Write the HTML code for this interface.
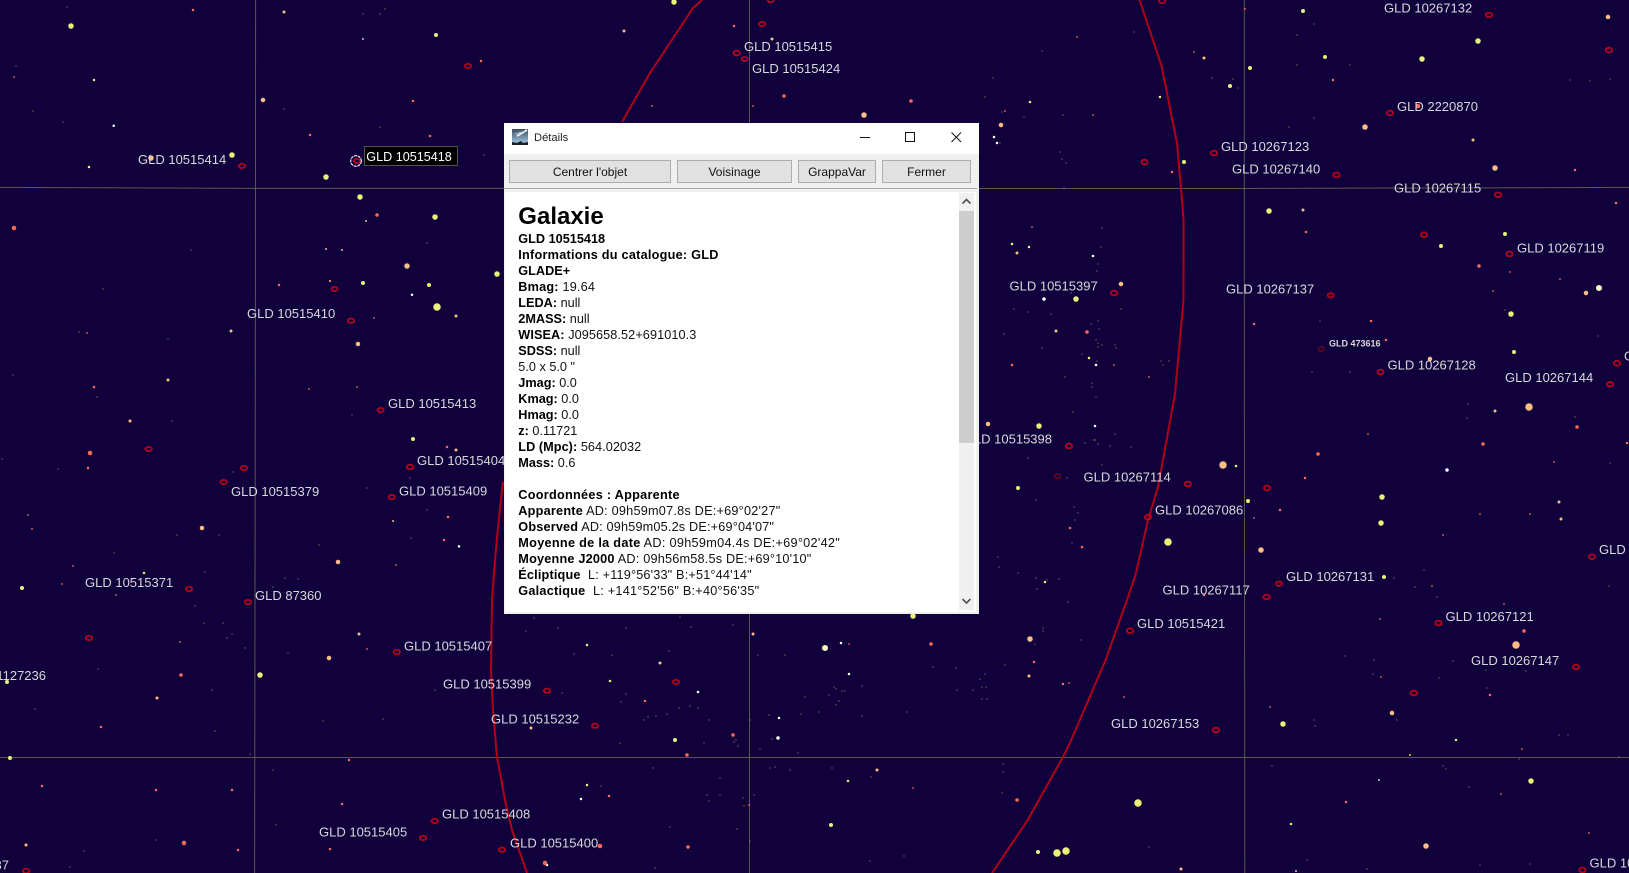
<!DOCTYPE html>
<html><head><meta charset="utf-8"><title>Détails</title>
<style>
html,body{margin:0;padding:0;width:1629px;height:873px;overflow:hidden;background:#10003c}
svg.sky{position:absolute;left:0;top:0}
.sky text{font-family:"Liberation Sans",Arial,sans-serif;font-size:13px;fill:#d9d9d9}
.d{fill:none;stroke-linecap:round}
#w{position:absolute;left:504px;top:123px;width:475px;height:491px;background:#f0f0f0;font-family:"Liberation Sans",Arial,sans-serif;color:#000}
#tb{position:absolute;left:0;top:0;width:475px;height:31px;background:#fff}
#tb span{position:absolute;left:30px;top:8px;font-size:11.2px;line-height:14px;color:#222}
#bar{position:absolute;left:0;top:65px;width:473px;height:1px;background:#a8a8a8}
.b{position:absolute;top:37px;height:21px;background:#e1e1e1;border:1px solid #adadad;font-size:12px;line-height:23px;text-align:center;color:#111}
#c{position:absolute;left:1px;top:69px;width:471px;height:420px;background:#fff;overflow:hidden}
#t{position:absolute;left:13.3px;top:39px;font-size:12.7px;line-height:16px;white-space:nowrap;color:#111}
#t b{color:#000}
#h{position:absolute;left:13.3px;top:10px;font-size:24px;font-weight:bold;line-height:30px;color:#000}
#sb{position:absolute;left:454px;top:1px;width:15px;height:417px;background:#f0f0f0}
#th{position:absolute;left:0;top:18px;width:15px;height:232px;background:#cdcdcd}
</style></head><body>
<svg class="sky" width="1629" height="873" viewBox="0 0 1629 873" xmlns="http://www.w3.org/2000/svg">
<rect width="1629" height="873" fill="#10003c"/>
<g fill="none" stroke="#5a584c" stroke-width="1">
<path d="M255.6 0L255.4 300L254.6 873"/><path d="M749.5 0V873"/><path d="M1244.3 0V300L1244.8 873"/>
<path d="M0 187.4L255 188.4L1244 188.5L1629 187.4"/><path d="M0 757.5H1629"/>
</g>
<g fill="none" stroke="#b00018" stroke-width="2">
<path d="M702 0L693 8L650 73L622 122M503 482Q496 540 492 600L491 670L493 710L497 757L505 800L512 830L527 873"/>
<path d="M1139.6 0L1161.6 66L1177 143L1181 188L1183.6 220L1183.5 300L1175 394L1158 487L1148 520L1135.5 575L1127 600L1105.6 660L1069 745L1063 757L1027.7 820L992 873"/>
</g>
<g class="d" stroke-width="1.3" stroke="#8a8460">
<path d="M67 7h0M16 66h0M33 111h0M63 122h0M380 127h0M484 155h0M191 250h0M103 289h0M427 243h0M284 109h0M385 9h0M380 14h0M363 14h0M79 332h0M168 339h0M13 375h0M97 397h0M172 421h0M2 459h0M58 469h0M233 472h0M177 535h0M219 535h0M319 545h0M285 578h0M367 488h0M411 538h0M427 510h0M410 478h0M298 579h0M273 587h0M205 572h0M114 553h0M352 415h0M98 669h0M35 709h0M204 623h0M223 623h0M232 634h0M227 638h0M245 648h0M212 690h0M215 731h0M250 754h0M273 770h0M323 721h0M288 653h0M383 719h0M328 829h0M276 825h0M84 851h0M70 867h0M156 840h0M195 606h0M461 814h0M435 690h0"/>
<path d="M534 618h0M680 617h0M691 627h0M558 628h0M526 631h0M626 628h0M733 625h0M574 654h0M669 651h0M612 655h0M562 693h0M626 694h0M644 720h0M679 708h0M698 708h0M690 706h0M667 714h0M621 702h0M648 717h0M656 716h0M709 720h0M620 743h0M734 742h0M736 740h0M738 746h0M769 715h0M750 720h0M704 743h0M760 749h0M772 739h0M805 697h0M819 712h0M801 714h0M862 716h0M845 691h0M836 705h0M829 695h0M834 687h0M836 689h0M842 691h0M862 686h0M907 712h0M973 690h0M980 679h0M987 699h0M982 687h0M933 667h0M957 690h0M956 668h0M853 610h0M880 611h0M785 655h0M758 655h0M839 701h0M798 753h0M775 767h0M770 768h0M832 768h0M871 777h0M790 770h0M653 768h0M707 795h0M709 801h0M720 795h0M720 778h0M754 795h0M743 798h0M744 806h0M737 829h0M670 827h0M750 841h0M870 861h0M904 856h0M655 868h0M601 786h0M1005 665h0"/>
<path d="M985 97h0M1042 51h0M1134 32h0M993 78h0M1002 112h0M1000 143h0M1024 117h0M1063 115h0M1060 152h0M1062 159h0M1066 163h0M1064 188h0M1297 65h0M1212 78h0M1233 79h0M1238 88h0M1314 24h0M1297 35h0M1350 65h0M1314 118h0M1289 127h0M1570 80h0M1590 81h0M1610 79h0M1071 293h0M1098 264h0M1102 228h0M1101 247h0M1097 271h0"/>
<path d="M1014 309h0M1028 312h0M1051 314h0M1121 309h0M1091 324h0M1098 321h0M1099 329h0M1004 334h0M1042 348h0M1116 348h0M1096 340h0M1098 343h0M1098 347h0M1102 345h0M1115 345h0M1082 354h0M1097 361h0M1161 361h0M1169 361h0M1163 365h0M1065 377h0M1092 383h0M1092 387h0M1096 397h0M1073 412h0M1115 434h0M1094 440h0M1085 443h0M1095 440h0M1110 446h0M1098 444h0M1131 447h0M1028 458h0M1102 465h0M1067 478h0M1036 500h0M1074 507h0M1078 513h0M1075 520h0M1072 543h0M998 557h0M999 567h0M1018 573h0M1047 580h0M1036 578h0M1059 579h0M1037 589h0M1320 321h0M1505 310h0M1598 336h0M1312 372h0M1350 372h0M1468 404h0M1467 418h0M1575 417h0M1610 463h0M1394 578h0M1424 570h0M1415 587h0M1609 586h0M1437 597h0"/>
<path d="M1068 602h0M1043 628h0M1043 631h0M1081 640h0M1035 644h0M985 674h0M986 687h0M982 699h0M1345 656h0M1374 660h0M1373 674h0M1439 678h0M1453 661h0M1487 688h0M1486 670h0M1526 671h0M1397 720h0M1314 720h0M1315 726h0M1559 735h0M1568 735h0M1619 757h0M1519 759h0M1272 766h0M1443 766h0M1446 769h0M1469 787h0M1003 764h0M1003 772h0M1002 793h0M1149 847h0M1307 860h0M1367 869h0M1480 865h0M1530 864h0"/>
</g>
<g class="d" stroke="#fff">
<path stroke-width="2.5" d="M113.7 125.7h0M412 294.7h0M459 546.4h0M698 692h0M841 643h0M849 674h0M779 718h0M581 799h0M547 865h0M994 137h0M997 143h0M1093 256h0M1096 365h0M1095 426h0"/>
<path stroke-width="3.5" d="M778 738h0M1044 299h0M1447 470h0"/>
</g>
<g class="d" stroke="#ecf278">
<path stroke-width="7.5" d="M1138 803h0M1057 853h0M1066 851h0M1168 542h0M437 307h0"/>
<path stroke-width="5.5" d="M260 675h0M1269 211h0M1478 41h0M1422 59h0M71 26h0M232 155h0M326 177h0M360 197h0M435 217h0M497 274h0M1076 299h0M1039 426h0M1382 497h0M1381 523h0M1511 314h0M1531 781h0M1283 724h0M913 616h0M674 2h0"/>
<path stroke-width="4" d="M363 283h0M429 285h0M413 439h0M22 588h0M7 682h0M10 758h0M675 740h0M831 825h0M1303 11h0M1325 57h0M1250 68h0M1230 86h0M1184 162h0M1505 234h0M1441 246h0M1514 352h0M1018 488h0M1248 501h0M1384 577h0M1038 852h0M436 35h0"/>
<path stroke-width="2.5" d="M94 80h0M89 167h0M144 573h0M587 785h0M587 645h0M610 681h0M848 781h0M1030 102h0M1160 97h0M1012 244h0M1029 247h0M1089 358h0M1236 466h0M1045 582h0M1291 824h0M1456 740h0"/>
</g>
<path class="d" stroke="#ffffc8" stroke-width="6" d="M825 648h0M1599 288h0"/>
<g class="d" stroke="#ffbc85">
<path stroke-width="7.5" d="M1529 407h0M1223 465h0M1516 645h0"/>
<path stroke-width="5.5" d="M151 158h0M407 266h0M1365 127h0M1495 168h0M1030 639h0M1426 846h0M864 115h0M1261 550h0"/>
<path stroke-width="4.5" d="M263 100h0M358 344h0M202 528h0M338 562h0M329 658h0M1001 125h0M1121 284h0M1586 293h0M1608 17h0M1430 359h0M988 424h0M1392 713h0"/>
<path stroke-width="3" d="M284 12h0M231 331h0M456 316h0M168 380h0M130 421h0M456 450h0M359 634h0M157 698h0M26 845h0M753 634h0M660 663h0M531 728h0M877 770h0M1204 58h0M1303 210h0M1017 253h0M1495 411h0M1559 502h0M1561 519h0M1029 676h0M1181 869h0M1473 140h0M1056 331h0M624 31h0M772 39h0"/>
<path stroke-width="2" d="M363 39h0M366 221h0M326 249h0M342 250h0M330 281h0M393 521h0M1379 780h0M1410 755h0M1296 871h0"/>
</g>
<g class="d" stroke="#ff6a55">
<path stroke-width="4.5" d="M14 228h0M90 453h0M184 843h0M545 863h0M600 846h0M1418 106h0"/>
<path stroke-width="3.5" d="M377 215h0M181 675h0M931 644h0M733 735h0M687 755h0M688 847h0M911 101h0M784 96h0M1087 332h0M1524 631h0M1017 800h0M1479 266h0M1577 427h0M1483 444h0M1318 454h0"/>
<path stroke-width="2.5" d="M193 10h0M481 61h0M413 101h0M310 135h0M430 136h0M279 285h0M94 387h0M88 468h0M447 447h0M448 517h0M444 540h0M101 727h0M42 786h0M156 790h0M232 790h0M349 760h0M342 804h0M238 850h0M330 849h0M645 701h0M609 796h0M734 26h0M1333 80h0M1172 172h0M1575 170h0M1306 232h0M1616 203h0M1254 324h0M1371 321h0M1386 340h0M1012 365h0M1305 478h0M1627 443h0M1280 510h0M1070 528h0M1082 547h0M1204 595h0M1034 662h0M1063 684h0M1490 695h0M1346 802h0"/>
<path stroke-width="1.8" d="M14 77h0M87 333h0M374 318h0M309 389h0M357 387h0M28 515h0M32 529h0M73 566h0M62 584h0M396 565h0M116 595h0M132 579h0M180 642h0M367 649h0M849 644h0M913 788h0M749 805h0M652 106h0M753 106h0M1245 9h0M1077 37h0M1194 52h0M1005 111h0M1093 115h0M1032 227h0M1510 272h0M1560 279h0M1493 291h0M1114 365h0M1149 377h0M1368 434h0M1554 462h0M1254 518h0M1480 514h0M1530 514h0M1443 535h0M1432 586h0M1380 619h0M1504 604h0M1069 683h0M1381 677h0M1124 697h0M1270 707h0M1522 749h0M1501 794h0M1589 833h0"/>
</g>
<g fill="none" stroke="#bc0018" stroke-width="1.7">
<ellipse cx="242" cy="166" rx="3.2" ry="2.2"/><ellipse cx="468" cy="66" rx="3.2" ry="2.2"/><ellipse cx="357" cy="161" rx="3.2" ry="2.2"/><ellipse cx="334.5" cy="289" rx="3" ry="2.2"/>
<ellipse cx="351" cy="320.7" rx="3.2" ry="2.2"/><ellipse cx="380.7" cy="410" rx="3" ry="2.2"/><ellipse cx="148.7" cy="449" rx="3.2" ry="2.2"/><ellipse cx="244" cy="468" rx="3.2" ry="2.2"/><ellipse cx="223.7" cy="482" rx="3.2" ry="2.2"/><ellipse cx="410" cy="467" rx="3.2" ry="2.4"/><ellipse cx="391.7" cy="497" rx="3.2" ry="2.2"/><ellipse cx="189" cy="589" rx="3.2" ry="2.2"/><ellipse cx="248" cy="602" rx="3.2" ry="2.2"/>
<ellipse cx="89" cy="638" rx="3.2" ry="2.2"/><ellipse cx="396.7" cy="652" rx="3.2" ry="2.2"/><ellipse cx="434.7" cy="821" rx="3.2" ry="2.2"/><ellipse cx="423" cy="838" rx="3.2" ry="2.2"/><ellipse cx="26" cy="871" rx="3.2" ry="2.2"/>
<ellipse cx="547" cy="690.7" rx="3.2" ry="2.2"/><ellipse cx="676" cy="682" rx="3.2" ry="2.2"/><ellipse cx="595" cy="725.7" rx="3.2" ry="2.2"/><ellipse cx="502" cy="849.7" rx="3.2" ry="2.2"/>
<ellipse cx="762" cy="24" rx="3.2" ry="2.2"/><ellipse cx="736.7" cy="53" rx="3.2" ry="2.4"/><ellipse cx="744.7" cy="59" rx="3" ry="2.2"/><ellipse cx="770.7" cy="0" rx="3.2" ry="2.2"/>
<ellipse cx="1162" cy="1" rx="3.2" ry="2.2"/><ellipse cx="1489" cy="15" rx="3.2" ry="2.2"/><ellipse cx="1609" cy="50" rx="3.2" ry="2.4"/><ellipse cx="1390" cy="113" rx="3" ry="2.4"/><ellipse cx="1214" cy="153" rx="3.2" ry="2.4"/><ellipse cx="1144.6" cy="162" rx="3" ry="2.4"/><ellipse cx="1336.5" cy="175" rx="3.2" ry="2.4"/><ellipse cx="1498" cy="194.7" rx="3.2" ry="2.4"/><ellipse cx="1424" cy="234.7" rx="3.2" ry="2.4"/><ellipse cx="1509.4" cy="254" rx="3.2" ry="2.4"/><ellipse cx="1330.7" cy="295.3" rx="3" ry="2.2"/><ellipse cx="1114" cy="293" rx="3.2" ry="2.4"/>
<ellipse cx="1380.5" cy="372" rx="3" ry="2.4"/><ellipse cx="1617" cy="363.3" rx="3.2" ry="2.4"/><ellipse cx="1610" cy="384.3" rx="3.2" ry="2.2"/><ellipse cx="1069" cy="446" rx="3.2" ry="2.4"/><ellipse cx="1187.7" cy="484" rx="3.2" ry="2.4"/><ellipse cx="1267" cy="488" rx="3.2" ry="2.4"/><ellipse cx="1148" cy="517.3" rx="3.2" ry="2.4"/><ellipse cx="1592" cy="556.7" rx="3.2" ry="2.4"/><ellipse cx="1279" cy="583.7" rx="3" ry="2.2"/><ellipse cx="1266.5" cy="597" rx="3.2" ry="2.4"/>
<ellipse cx="1130" cy="630.7" rx="3.2" ry="2.4"/><ellipse cx="1438.5" cy="623" rx="3.2" ry="2.4"/><ellipse cx="1576" cy="667" rx="3.2" ry="2.4"/><ellipse cx="1414" cy="693" rx="3.2" ry="2.4"/><ellipse cx="1216" cy="730" rx="3.2" ry="2.4"/><ellipse cx="1582.4" cy="870" rx="3.2" ry="2.4"/>
</g>
<g fill="none" stroke="#6e0018" stroke-width="1.5"><ellipse cx="1321" cy="349" rx="3" ry="2.2"/><ellipse cx="1057.5" cy="476" rx="3" ry="2.2"/></g>
<circle cx="356" cy="161" r="5.3" fill="none" stroke="#fff" stroke-width="1.1" stroke-dasharray="3 .8"/>
<text x="138" y="164">GLD 10515414</text>
<text x="247" y="318">GLD 10515410</text>
<text x="388" y="408">GLD 10515413</text>
<text x="417" y="465">GLD 10515404</text>
<text x="231" y="496">GLD 10515379</text>
<text x="399" y="495.5">GLD 10515409</text>
<text x="85" y="587">GLD 10515371</text>
<text x="255" y="600">GLD 87360</text>
<text x="46" y="680" text-anchor="end">GLD 11127236</text>
<text x="404" y="650.5">GLD 10515407</text>
<text x="443" y="688.5">GLD 10515399</text>
<text x="491" y="723.5">GLD 10515232</text>
<text x="319" y="836.5">GLD 10515405</text>
<text x="442" y="818.5">GLD 10515408</text>
<text x="510" y="847.5">GLD 10515400</text>
<text x="9" y="869.5" text-anchor="end">GLD 10515337</text>
<text x="744" y="51">GLD 10515415</text>
<text x="752" y="73">GLD 10515424</text>
<text x="1384" y="12.5">GLD 10267132</text>
<text x="1397" y="111">GLD 2220870</text>
<text x="1221" y="151">GLD 10267123</text>
<text x="1232" y="173.5">GLD 10267140</text>
<text x="1394" y="192.5">GLD 10267115</text>
<text x="1517" y="252.5">GLD 10267119</text>
<text x="1009.5" y="290.5">GLD 10515397</text>
<text x="1226" y="293.5">GLD 10267137</text>
<text x="1329" y="346.5" style="font-size:9px;font-weight:bold">GLD 473616</text>
<text x="1387.5" y="369.5">GLD 10267128</text>
<text x="1505" y="382">GLD 10267144</text>
<text x="1624" y="360.5">GLD 10267130</text>
<text x="1052" y="443.5" text-anchor="end">GLD 10515398</text>
<text x="1083.5" y="481.5">GLD 10267114</text>
<text x="1155" y="514.5">GLD 10267086</text>
<text x="1162.5" y="594.5">GLD 10267117</text>
<text x="1286" y="581">GLD 10267131</text>
<text x="1599" y="554">GLD 10267126</text>
<text x="1137" y="628">GLD 10515421</text>
<text x="1445.5" y="621">GLD 10267121</text>
<text x="1471" y="665">GLD 10267147</text>
<text x="1111" y="728">GLD 10267153</text>
<text x="1589.5" y="867.5">GLD 10267150</text>
<rect x="364.5" y="146.5" width="93" height="19" fill="#000" stroke="#555540"/>
<text x="366.3" y="161" style="font-size:12.6px;fill:#fff">GLD 10515418</text>
</svg>
<div id="w">
<div id="tb">
<svg style="position:absolute;left:8px;top:6px" width="16" height="16" viewBox="0 0 16 16" xmlns="http://www.w3.org/2000/svg">
<defs><linearGradient id="g" x1="0" y1="0" x2="0" y2="1"><stop offset="0" stop-color="#3b4a60"/><stop offset=".75" stop-color="#8fb4cc"/><stop offset="1" stop-color="#9cc0d4"/></linearGradient></defs>
<rect width="16" height="16" fill="url(#g)"/>
<path d="M15 1L5 7" stroke="#e8eef2" stroke-width="2" fill="none"/>
<path d="M13 2L3 5" stroke="#aab8c4" stroke-width="1" fill="none"/>
<path d="M0 16V13L5 14L9 12L11 14L16 13V16Z" fill="#1a2028"/>
</svg>
<span>Détails</span>
<svg style="position:absolute;left:350px;top:4px" width="120" height="20" viewBox="0 0 120 20" xmlns="http://www.w3.org/2000/svg" fill="none" stroke="#111" stroke-width="1">
<path d="M6 10.5H16"/>
<rect x="51.5" y="5.5" width="9" height="9"/>
<path d="M97.5 5.5L107 15M107 5.5L97.5 15"/>
</svg>
</div>
<div class="b" style="left:5px;width:160px">Centrer l'objet</div>
<div class="b" style="left:173px;width:113px">Voisinage</div>
<div class="b" style="left:294px;width:76px">GrappaVar</div>
<div class="b" style="left:378px;width:87px">Fermer</div>
<div id="bar"></div>
<div id="c">
<div id="h">Galaxie</div>
<div id="t">
<b>GLD 10515418</b><br>
<span style="letter-spacing:.24px"><b>Informations du catalogue: GLD</b></span><br>
<b>GLADE+</b><br>
<span style="letter-spacing:.19px"><b>Bmag:</b> 19.64</span><br>
<b>LEDA:</b> null<br>
<b>2MASS:</b> null<br>
<span style="letter-spacing:.08px"><b>WISEA:</b> J095658.52+691010.3</span><br>
<b>SDSS:</b> null<br>
5.0 x 5.0 "<br>
<b>Jmag:</b> 0.0<br>
<b>Kmag:</b> 0.0<br>
<b>Hmag:</b> 0.0<br>
<b>z:</b> 0.11721<br>
<span style="letter-spacing:.05px"><b>LD (Mpc):</b> 564.02032</span><br>
<b>Mass:</b> 0.6<br>
<br>
<span style="letter-spacing:.27px"><b>Coordonnées : Apparente</b></span><br>
<span style="letter-spacing:.22px"><b>Apparente</b> AD: 09h59m07.8s DE:+69°02'27"</span><br>
<span style="letter-spacing:.17px"><b>Observed</b> AD: 09h59m05.2s DE:+69°04'07"</span><br>
<span style="letter-spacing:.29px"><b>Moyenne de la date</b> AD: 09h59m04.4s DE:+69°02'42"</span><br>
<span style="letter-spacing:.2px"><b>Moyenne J2000</b> AD: 09h56m58.5s DE:+69°10'10"</span><br>
<span style="letter-spacing:.17px"><b>Écliptique</b>&nbsp; L: +119°56'33" B:+51°44'14"</span><br>
<span style="letter-spacing:.23px"><b>Galactique</b>&nbsp; L: +141°52'56" B:+40°56'35"</span>
</div>
<div id="sb">
<div id="th"></div>
<svg style="position:absolute;left:0;top:0" width="15" height="417" viewBox="0 0 15 417" xmlns="http://www.w3.org/2000/svg" fill="none" stroke="#505050" stroke-width="1.6">
<path d="M3.5 10.5L7.5 6.5L11.5 10.5"/>
<path d="M3.5 406L7.5 410L11.5 406"/>
</svg>
</div>
</div>
</div>
</body></html>
